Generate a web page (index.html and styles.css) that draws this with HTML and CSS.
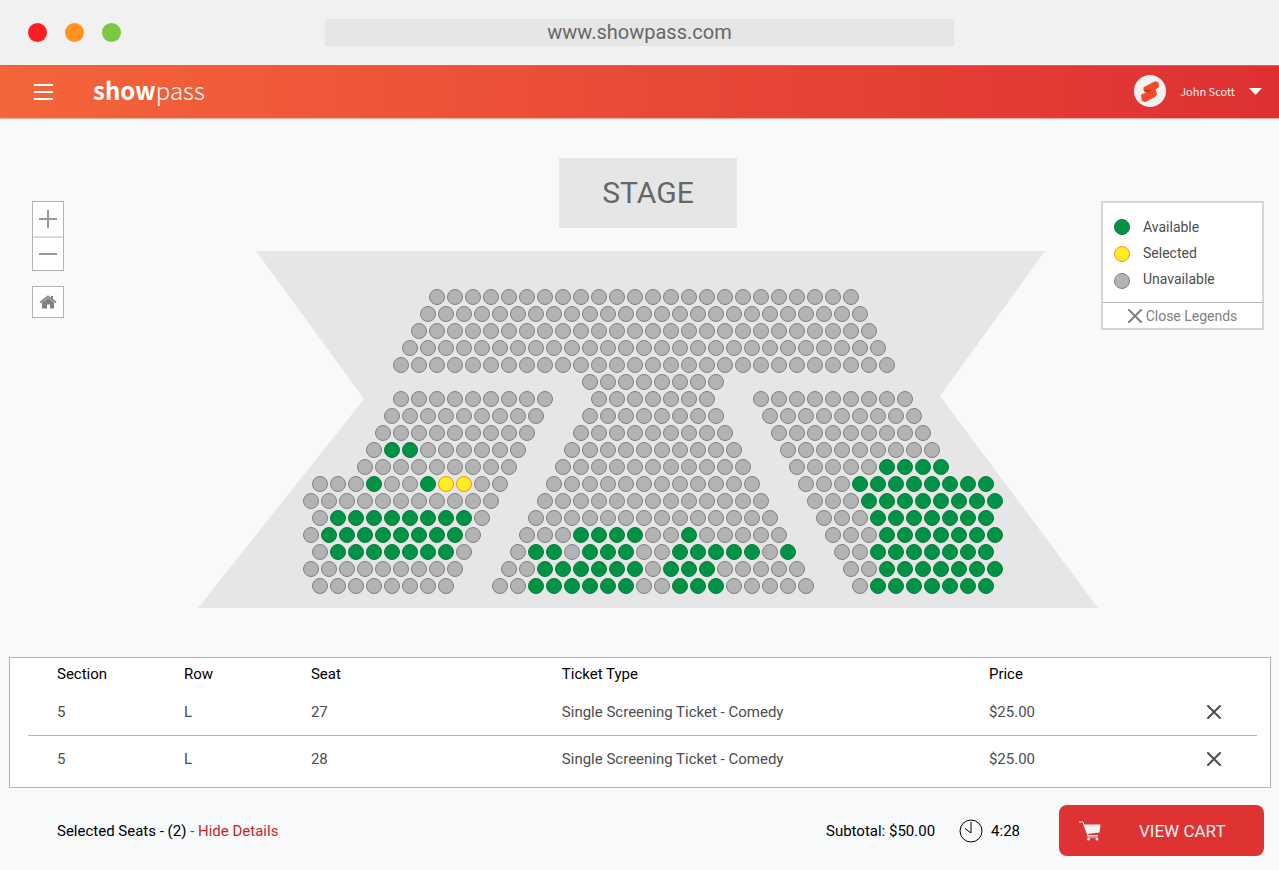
FILE: index.html
```html
<!DOCTYPE html>
<html lang="en">
  <head>
    <meta charset="UTF-8" />
    <meta name="viewport" content="width=device-width, initial-scale=1.0" />
    <title>Showpass</title>
    <link rel="stylesheet" href="styles.css">
  </head>
  <body>
    <div class="browser-bar">
      <div class="dots">
        <span class="dot red"></span>
        <span class="dot orange"></span>
        <span class="dot green"></span>
      </div>
      <div class="url">www.showpass.com</div>
    </div>

    <header class="header">
      <button class="menu-btn" aria-label="Menu">
        <span></span>
        <span></span>
        <span></span>
      </button>
      <a class="logo" href="#"><b>show</b>pass</a>
      <button class="user">
        <svg class="avatar" width="32" height="32" viewBox="0 0 32 32">
          <circle cx="16" cy="16" r="16" fill="#f2f2f2" />
          <g fill="#f04b2b" stroke="#f04b2b" stroke-width="2" stroke-linejoin="round">
            <path d="M10.500 13 L21 7.300 L23.300 8 L24.200 11.500 L20 14.300 L12 16 L10.500 15.500 Z" />
            <path d="M8 20.500 L12 18.500 L21 15.500 L22 19 L20.500 21 L11 26 L8.700 25 Z" />
          </g>
          <path d="M10 15 L19 14.500 L14 17.500 L11 17 Z" fill="#c9302a" />
        </svg>
        <span>John Scott</span>
        <svg width="13" height="7" viewBox="0 0 13 7"><path d="M0 0h13L6.500 7z" fill="#fff" /></svg>
      </button>
    </header>

    <main class="venue">
      <div class="controls">
        <div class="zoom">
          <button aria-label="Zoom in">
            <svg width="18" height="18" viewBox="0 0 18 18"><path d="M0 9h18M9 0v18" stroke="#999" stroke-width="2" /></svg>
          </button>
          <button aria-label="Zoom out">
            <svg width="18" height="18" viewBox="0 0 18 18"><path d="M0 9h18" stroke="#999" stroke-width="2" /></svg>
          </button>
        </div>
        <button class="home" aria-label="Reset view">
          <svg width="18" height="14" viewBox="0 0 18 14">
            <path d="M3 7.500 L9 3 L15 7.500 V13.500 H11 V9.500 H8 V13.500 H3 Z" fill="#808080" />
            <path d="M1 7.500 L9 1.500 L17 7.500" fill="none" stroke="#8c8c8c" stroke-width="2" />
            <path d="M12 1h2v3h-2z" fill="#808080" />
          </svg>
        </button>
      </div>

      <div class="map">
        <div class="stage">STAGE</div>
        <div class="floor">
          <div class="seats" id="seats"></div>
        </div>
      </div>

      <aside class="legend">
        <div class="legend-body">
          <div class="legend-keys" aria-hidden="true">
            <span class="seat available"></span>
            <span class="seat selected"></span>
            <span class="seat"></span>
          </div>
          <ul class="legend-list">
            <li>Available</li>
            <li>Selected</li>
            <li>Unavailable</li>
          </ul>
        </div>
        <button class="legend-close">
          <svg width="14" height="14" viewBox="0 0 14 14"><path d="M1 1l12 12M13 1L1 13" stroke="#808080" stroke-width="2" stroke-linecap="round" /></svg>
          Close Legends
        </button>
      </aside>
    </main>

    <section class="details">
      <table>
        <thead>
          <tr>
            <th class="col-section">Section</th>
            <th class="col-row">Row</th>
            <th class="col-seat">Seat</th>
            <th class="col-type">Ticket Type</th>
            <th>Price</th>
            <td class="col-remove"></td>
          </tr>
        </thead>
        <tbody>
          <tr>
            <td>5</td>
            <td>L</td>
            <td>27</td>
            <td>Single Screening Ticket - Comedy</td>
            <td>$25.00</td>
            <td>
              <button class="remove" aria-label="Remove seat 27">
                <svg width="16" height="16" viewBox="0 0 16 16"><path d="M2 2l12 12M14 2L2 14" stroke="#4d4d4d" stroke-width="2" stroke-linecap="round" /></svg>
              </button>
            </td>
          </tr>
          <tr>
            <td>5</td>
            <td>L</td>
            <td>28</td>
            <td>Single Screening Ticket - Comedy</td>
            <td>$25.00</td>
            <td>
              <button class="remove" aria-label="Remove seat 28">
                <svg width="16" height="16" viewBox="0 0 16 16"><path d="M2 2l12 12M14 2L2 14" stroke="#4d4d4d" stroke-width="2" stroke-linecap="round" /></svg>
              </button>
            </td>
          </tr>
        </tbody>
      </table>
    </section>

    <footer class="footer">
      <p class="count">Selected Seats - (2) <a href="#">- Hide Details</a></p>
      <p class="subtotal">Subtotal: $50.00</p>
      <p class="timer">
        <svg width="24" height="24" viewBox="0 0 24 24" fill="none" stroke="#000">
          <circle cx="12" cy="12" r="11" />
          <path d="M12 3v11L6 9.500" />
        </svg>
        4:28
      </p>
      <button class="cart-btn">
        <svg width="22" height="20" viewBox="0 0 22 20">
          <path d="M0 1h4l5 13.500h10" fill="none" stroke="#f2f2f2" stroke-width="1" />
          <path d="M4.500 3.500H21.500L20.500 11.500L8 13Z" fill="#f2f2f2" />
          <path d="M8 14.500L9.500 16h9" fill="none" stroke="#f2f2f2" />
          <circle cx="9.500" cy="18" r="1.500" fill="#f2f2f2" />
          <circle cx="18" cy="18" r="1.500" fill="#f2f2f2" />
        </svg>
        <span>VIEW CART</span>
      </button>
    </footer>

    <script src="seats.js"></script>
  </body>
</html>
```
FILE: styles.css
```css
* {
  box-sizing: border-box;
}
body {
  display: flex;
  flex-direction: column;
  min-height: 100vh;
  margin: 0;
  background-color: #f8f9fb;
  font-family: Roboto, "Liberation Sans", sans-serif;
  font-size: 15px;
  color: #000;
}
button {
  margin: 0;
  padding: 0;
  border: none;
  background: none;
  font: inherit;
  color: inherit;
  cursor: pointer;
}
svg {
  display: block;
}
p {
  margin: 0;
}

/* browser bar */
.browser-bar {
  display: grid;
  grid-template-columns: 1fr 2fr 1fr;
  align-items: center;
  height: 65px;
  padding: 0 11px;
  background-color: #f1f1f1;
}
.dots {
  display: flex;
  gap: 18px;
  padding-left: 17px;
}
.dot {
  width: 19px;
  height: 19px;
  border-radius: 50%;
}
.dot.red {
  background-color: #ff1d25;
}
.dot.orange {
  background-color: #ff931e;
}
.dot.green {
  background-color: #7ac943;
}
.url {
  background-color: #e6e6e6;
  color: #666;
  font-size: 20px;
  line-height: 27px;
  text-align: center;
}

/* header */
.header {
  display: flex;
  align-items: center;
  height: 54px;
  padding: 0 17px 0 34px;
  border-top: 1px solid #c4705a;
  border-bottom: 1px solid #f3a99d;
  background: linear-gradient(to right, #f4653a, #de3033);
}
.menu-btn {
  display: grid;
  gap: 5px;
  width: 19px;
}
.menu-btn span {
  height: 2px;
  background-color: #fff;
}
.logo {
  margin-left: 40px;
  padding-bottom: 4px;
  color: #fff;
  font-family: "Noto Sans CJK SC", "Noto Sans", sans-serif;
  font-size: 24px;
  font-weight: 300;
  line-height: 32px;
  text-decoration: none;
}
.logo b {
  font-weight: 700;
}
.user {
  display: flex;
  align-items: center;
  gap: 14px;
  margin-left: auto;
  padding-bottom: 2px;
  color: #f2f2f2;
  font-family: "Noto Sans CJK SC", "Noto Sans", sans-serif;
  font-size: 11px;
}

/* seat map */
.venue {
  display: grid;
  grid-template-columns: 1fr 900px 1fr;
  align-items: start;
  padding: 39px 15px 49px 32px;
}
.controls {
  display: grid;
  gap: 15px;
  width: 32px;
  margin-top: 43px;
}
.zoom,
.home {
  border: 1px solid #b3b3b3;
  background-color: #fff;
}
.zoom button {
  display: grid;
  place-items: center;
  width: 100%;
  height: 34px;
}
.zoom button + button {
  border-top: 2px solid #d9d9d9;
}
.home {
  display: grid;
  place-items: center;
  height: 32px;
}
.stage {
  width: 178px;
  margin: 0 auto 23px;
  background-color: #e6e6e6;
  color: #666;
  font-size: 30px;
  line-height: 70px;
  text-align: center;
}
.floor {
  height: 357px;
  padding: 38px 0 0 104px;
  background-color: #e6e6e6;
  clip-path: polygon(58px 0, 847px 0, 742px 145px, 100% 100%, 0 100%, 166px 148px);
}
/* a seat takes two columns, so rows can shift by half a seat */
.seats {
  display: grid;
  grid-template-columns: repeat(78, 9px);
  grid-auto-rows: 17px;
  justify-items: center;
}
.seat {
  width: 16px;
  height: 16px;
  border: 1px solid #808080;
  border-radius: 50%;
  background-color: #b3b3b3;
}
.seat.available {
  border-color: #0b7a3c;
  background-color: #009245;
}
.seat.selected {
  border-color: #f7931e;
  background-color: #fcee21;
}

/* legend */
.legend {
  justify-self: end;
  width: 163px;
  margin-top: 43px;
  border: 2px solid #d4d5d7;
  background-color: #fff;
  color: #4d4d4d;
  font-size: 14px;
}
.legend-body {
  display: flex;
  gap: 13px;
  padding: 11px 11px 10px;
}
.legend-keys {
  display: grid;
  gap: 11px;
  align-content: start;
  padding-top: 5px;
}
.legend-list {
  margin: 0;
  padding: 0;
  list-style: none;
  line-height: 26px;
}
.legend-close {
  display: flex;
  align-items: center;
  justify-content: center;
  gap: 4px;
  width: 100%;
  height: 26px;
  border-top: 1px solid #b3b3b3;
  color: #808080;
}

/* selected seats */
.details {
  margin: 0 8px 0 9px;
  padding: 0 13px 4px 18px;
  border: 1px solid #b3b3b3;
  background-color: #fff;
}
table {
  width: 100%;
  table-layout: fixed;
  border-collapse: collapse;
}
th,
td {
  padding: 0 0 0 29px;
  font-weight: 400;
  text-align: left;
}
th {
  height: 32px;
}
tbody td {
  height: 45px;
  color: #4d4d4d;
}
tbody tr + tr td {
  height: 48px;
  border-top: 1px solid #b3b3b3;
}
.col-section,
.col-row {
  width: 10.33%;
}
.col-seat {
  width: 20.42%;
}
.col-type {
  width: 34.75%;
}
.col-remove {
  width: 80px;
}
.remove {
  display: block;
}

/* footer */
.footer {
  display: flex;
  align-items: center;
  padding: 17px 15px 14px 57px;
}
.count a {
  color: #c1272d;
  text-decoration: none;
}
.subtotal {
  margin-left: auto;
}
.timer {
  display: flex;
  align-items: center;
  gap: 8px;
  margin: 0 39px 0 24px;
}
.cart-btn {
  display: flex;
  align-items: center;
  gap: 38px;
  width: 205px;
  height: 51px;
  padding: 0 20px;
  border-radius: 8px;
  background-color: #df3333;
  color: #f2f2f2;
  font-size: 17px;
}
```
FILE: seats.js
```js
// each row is a list of blocks: [first column, seats]
// u = unavailable, a = available, s = selected
var rows = [
  [[14, "u".repeat(24)]],
  [[13, "u".repeat(25)]],
  [[12, "u".repeat(26)]],
  [[11, "u".repeat(27)]],
  [[10, "u".repeat(28)]],
  [[31, "uuuuuuuu"]],
  [[10, "uuuuuuuuu"], [32, "uuuuuuu"], [50, "uuuuuuuuu"]],
  [[9, "uuuuuuuuu"], [31, "uuuuuuuu"], [51, "uuuuuuuuu"]],
  [[8, "uuuuuuuuu"], [30, "uuuuuuuuu"], [52, "uuuuuuuuu"]],
  [[7, "uaauuuuuu"], [29, "uuuuuuuuuu"], [53, "uuuuuuuuu"]],
  [[6, "uuuuuuuuu"], [28, "uuuuuuuuuuu"], [54, "uuuuuaaaa"]],
  [[1, "uuuauuassuu"], [27, "uuuuuuuuuuuu"], [55, "uuuaaaaaaaa"]],
  [[0, "uuuuuuuuuuu"], [26, "uuuuuuuuuuuuu"], [56, "uuuaaaaaaaa"]],
  [[1, "uaaaaaaaau"], [25, "uuuuuuuuuuuuuu"], [57, "uuuaaaaaaa"]],
  [[0, "uaaaaaaaau"], [24, "uuuaaaauuauuuuu"], [58, "uuuaaaaaaa"]],
  [[1, "uaaaaaaau"], [23, "uaauaaauuaaaaaua"], [59, "uuaaaaaaa"]],
  [[0, "uuuuuuuuu"], [22, "uuaaaaaauaaauuuuu"], [60, "uuaaaaaaa"]],
  [[1, "uuuuuuuu"], [21, "uuaaaaaauuaaauuuuu"], [61, "uaaaaaaa"]],
];

var names = { u: "unavailable", a: "available", s: "selected" };
var seats = document.getElementById("seats");

rows.forEach(function (blocks, r) {
  blocks.forEach(function (block) {
    block[1].split("").forEach(function (type, i) {
      var seat = document.createElement("button");
      seat.className = "seat " + names[type];
      seat.disabled = type == "u";
      seat.setAttribute("aria-label", "Row " + (r + 1) + ", " + names[type]);
      seat.style.gridArea = r + 1 + " / " + (block[0] + i * 2 + 1) + " / auto / span 2";
      seats.appendChild(seat);
    });
  });
});
```
